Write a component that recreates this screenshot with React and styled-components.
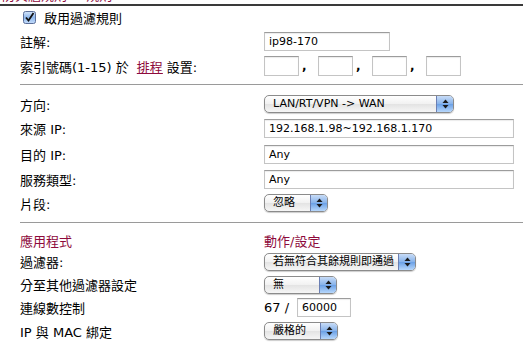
import React from "react";
import styled, { createGlobalStyle } from "styled-components";

const GlobalStyle = createGlobalStyle`
  body {
    margin: 0;
    background: #ffffff;
    font-family: "DejaVu Sans", "Noto Sans CJK TC", sans-serif;
    font-size: 13px;
    color: #000;
  }
`;

const RED = "#8e0a3c";

const Page = styled.div`
  width: 523px;
  height: 345px;
  overflow: hidden;
`;

const Crumb = styled.div`
  height: 4px;
  overflow: hidden;
  border-bottom: 2px solid #3a3a3a;
  > span {
    display: block;
    margin-top: -11px;
    padding-left: 2px;
    font-size: 13px;
    line-height: 14px;
    color: ${RED};
  }
`;

const Section = styled.div`
  margin-left: 20px;
  padding: ${(p) => p.$pad || "0"};
  border-bottom: ${(p) => (p.$last ? "none" : "1px solid #9a9a9a")};
`;

const Row = styled.div`
  display: grid;
  grid-template-columns: 244px 1fr;
  align-items: center;
  height: ${(p) => p.$h}px;
`;

const Label = styled.div`
  display: flex;
  align-items: center;
  gap: 8px;
  white-space: nowrap;
  color: ${(p) => (p.$red ? RED : "#000")};
  padding-left: ${(p) => p.$indent || 0}px;
`;

const Link = styled.span`
  color: ${RED};
  text-decoration: underline;
  margin: 0 4px 0 8px;
`;

const Value = styled.div`
  display: flex;
  align-items: center;
  color: ${(p) => (p.$red ? RED : "#000")};
`;

const TextBox = styled.div`
  box-sizing: border-box;
  width: ${(p) => p.$w}px;
  height: ${(p) => p.$h || 19}px;
  border: 1px solid #c4c4c4;
  border-top-color: #9c9c9c;
  box-shadow: inset 0 1px 1px rgba(0, 0, 0, 0.08);
  padding: 0 4px;
  font-size: 11px;
  line-height: ${(p) => (p.$h || 19) - 2}px;
  background: #fff;
  white-space: nowrap;
`;

const Comma = styled.span`
  width: 19px;
  padding-left: 3px;
  box-sizing: border-box;
  font-weight: bold;
  font-size: 12px;
`;

const SelectBox = styled.div`
  box-sizing: border-box;
  width: ${(p) => p.$w}px;
  height: 18px;
  display: flex;
  border: 1px solid #8b8b8b;
  border-radius: 5px;
  overflow: hidden;
  background: linear-gradient(#ffffff, #f1f1f1 50%, #e3e3e3 51%, #f6f6f6);
  box-shadow: 0 1px 1px rgba(0, 0, 0, 0.2);
`;

const SelectText = styled.span`
  flex: 1;
  padding-left: 8px;
  font-size: 11px;
  line-height: 16px;
  white-space: nowrap;
  overflow: hidden;
`;

const SelectArrow = styled.span`
  width: 16px;
  display: flex;
  align-items: center;
  justify-content: center;
  border-left: 1px solid #6b7fb3;
  background: linear-gradient(#c8dcf7, #86b2ea 50%, #6aa0e6 51%, #b7d7fb);
`;

const Counter = styled.span`
  margin-right: 8px;
  font-size: 13px;
`;

function Arrows() {
  return (
    <svg width="7" height="10" viewBox="0 0 7 10">
      <path d="M3.5 0.5 L6.5 4 L0.5 4 Z" fill="#1a1a1a" />
      <path d="M3.5 9.5 L6.5 6 L0.5 6 Z" fill="#1a1a1a" />
    </svg>
  );
}

function Select({ w, children }) {
  return (
    <SelectBox $w={w}>
      <SelectText>{children}</SelectText>
      <SelectArrow>
        <Arrows />
      </SelectArrow>
    </SelectBox>
  );
}

function CheckMark() {
  return (
    <svg width="13" height="13" viewBox="0 0 13 13">
      <defs>
        <linearGradient id="cb" x1="0" y1="0" x2="0" y2="1">
          <stop offset="0" stopColor="#d6e6fa" />
          <stop offset="0.5" stopColor="#8fb8ec" />
          <stop offset="1" stopColor="#c4dcfb" />
        </linearGradient>
      </defs>
      <rect x="0.5" y="0.5" width="12" height="12" rx="2" fill="url(#cb)" stroke="#5c6f99" />
      <path d="M3 6.5 L5.5 9.5 L10.5 2" fill="none" stroke="#111" strokeWidth="1.8" />
    </svg>
  );
}

export default function App() {
  return (
    <Page>
      <GlobalStyle />
      <Crumb>
        <span>防火牆規則 &gt; 規則</span>
      </Crumb>

      <Section $pad="0 0 6px 0">
        <Row $h={22}>
          <Label $indent={3}>
            <CheckMark />
            <span>啟用過濾規則</span>
          </Label>
        </Row>
        <Row $h={26}>
          <Label>註解:</Label>
          <Value>
            <TextBox $w={126}>ip98-170</TextBox>
          </Value>
        </Row>
        <Row $h={24}>
          <Label>
            <span>
              索引號碼(1-15) 於<Link>排程</Link>設置:
            </span>
          </Label>
          <Value>
            <TextBox $w={35} $h={20} />
            <Comma>,</Comma>
            <TextBox $w={35} $h={20} />
            <Comma>,</Comma>
            <TextBox $w={35} $h={20} />
            <Comma>,</Comma>
            <TextBox $w={35} $h={20} />
          </Value>
        </Row>
      </Section>

      <Section $pad="7px 0 8px 0">
        <Row $h={24}>
          <Label>方向:</Label>
          <Value>
            <Select w={190}>LAN/RT/VPN -&gt; WAN</Select>
          </Value>
        </Row>
        <Row $h={25}>
          <Label>來源 IP:</Label>
          <Value>
            <TextBox $w={250}>192.168.1.98~192.168.1.170</TextBox>
          </Value>
        </Row>
        <Row $h={26}>
          <Label>目的 IP:</Label>
          <Value>
            <TextBox $w={250}>Any</TextBox>
          </Value>
        </Row>
        <Row $h={25}>
          <Label>服務類型:</Label>
          <Value>
            <TextBox $w={250}>Any</TextBox>
          </Value>
        </Row>
        <Row $h={22}>
          <Label>片段:</Label>
          <Value>
            <Select w={64}>忽略</Select>
          </Value>
        </Row>
      </Section>

      <Section $pad="7px 0 0 0" $last>
        <Row $h={20}>
          <Label $red>應用程式</Label>
          <Value $red>動作/設定</Value>
        </Row>
        <Row $h={23}>
          <Label>過濾器:</Label>
          <Value>
            <Select w={152}>若無符合其餘規則即通過</Select>
          </Value>
        </Row>
        <Row $h={23}>
          <Label>分至其他過濾器設定</Label>
          <Value>
            <Select w={73}>無</Select>
          </Value>
        </Row>
        <Row $h={23}>
          <Label>連線數控制</Label>
          <Value>
            <Counter>67 /</Counter>
            <TextBox $w={54}>60000</TextBox>
          </Value>
        </Row>
        <Row $h={24}>
          <Label>IP 與 MAC 綁定</Label>
          <Value>
            <Select w={74}>嚴格的</Select>
          </Value>
        </Row>
      </Section>
    </Page>
  );
}
